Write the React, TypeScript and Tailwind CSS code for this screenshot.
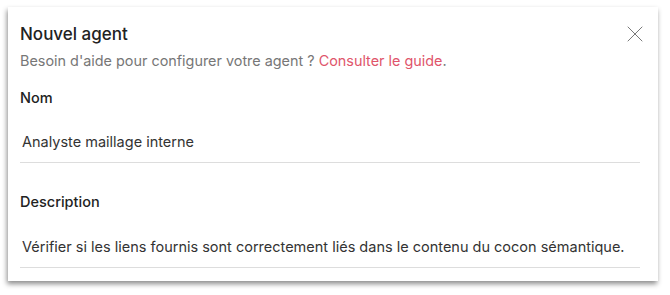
import { X } from 'lucide-react';

const FONT = { fontFamily: 'Inter, "Noto Sans", sans-serif' };

export default function App() {
  return (
    <div className="w-[670px] h-[295px] bg-white pt-[7px] pl-[8px]" style={FONT}>
      <div className="w-[650px] h-[274px] bg-white shadow-[-1px_3px_5px_rgba(0,0,0,0.45)] pl-[12px] pr-[18px] pt-[16px]">
        <div className="flex items-center justify-between">
          <h2 className="text-[17px] font-medium text-[#222] leading-[22px]">Nouvel agent</h2>
          <X className="w-[28px] h-[28px] text-[#666] mr-[-9px] -my-[3px]" strokeWidth={0.75} />
        </div>
        <p className="mt-[6px] text-[14.4px] leading-[20px] text-[#777]">
          Besoin d'aide pour configurer votre agent ? <span className="text-[#e0556b]">Consulter le guide</span>.
        </p>

        <label className="block mt-[17px] text-[14.5px] font-medium text-[#222] leading-[20px]">Nom</label>
        <div className="mt-[24px] border-b border-[#ddd] pl-[2px] pb-[10px] text-[14.5px] leading-[20px] text-[#333]">
          Analyste maillage interne
        </div>

        <label className="block mt-[29px] text-[14.5px] font-medium text-[#222] leading-[20px]">Description</label>
        <div className="mt-[25px] border-b border-[#ddd] pl-[2px] pb-[10px] text-[14.5px] leading-[20px] text-[#333]">
          Vérifier si les liens fournis sont correctement liés dans le contenu du cocon sémantique.
        </div>
      </div>
    </div>
  );
}
